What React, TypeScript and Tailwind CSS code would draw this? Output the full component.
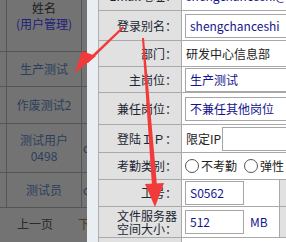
import React from 'react';

const font = { fontFamily: '"Noto Sans CJK SC", "Noto Sans", sans-serif' };

function Radio() {
  return <span className="inline-block w-[14px] h-[14px] rounded-full border border-[#555] bg-white mr-[2px]" />;
}

export default function App() {
  const leftRows = [
    { h: 'h-[35px]', text: ['生产测试'] },
    { h: 'h-[37px]', text: ['作废测试2'] },
    { h: 'h-[49px]', text: ['测试用户', '0498'], extra: 'c' },
    { h: 'h-[35px]', text: ['测试员'], extra: 'c' },
  ];

  const label = 'w-[83px] shrink-0 bg-[#e1e1e1] border-r border-[#a9a9a9] flex items-center justify-end pr-[4px] text-[12px] text-[#1b2633] whitespace-nowrap';
  const row = 'flex border-b border-[#a9a9a9]';
  const input = 'h-[24px] shrink-0 border border-[#a6a6a6] bg-white flex items-center px-[4px] text-[12px] text-[#14148c] whitespace-nowrap';

  return (
    <div className="relative w-[286px] h-[242px] overflow-hidden flex bg-white" style={font}>
      {/* table behind the dialog, greyed by the mask */}
      <div className="w-[87px] shrink-0 bg-[#737373] flex flex-col text-[12px] overflow-hidden">
        <div className="h-[52px] shrink-0 flex border-b border-[#555]">
          <div className="w-[6px] shrink-0" />
          <div className="w-[76px] shrink-0 border-l border-r border-[#555] flex flex-col items-center leading-[16px]">
            <span className="text-[#1c1c1c]">姓名</span>
            <span className="text-[#1e1e7a]">(用户管理)</span>
          </div>
        </div>
        {leftRows.map((r, i) => (
          <div key={i} className={`${r.h} shrink-0 flex border-b border-[#555]`}>
            <div className="w-[6px] shrink-0" />
            <div className="w-[76px] shrink-0 border-l border-r border-[#555] flex flex-col items-center justify-center leading-[16px] text-[#2b3f5c]">
              {r.text.map((t) => (
                <span key={t}>{t}</span>
              ))}
            </div>
            <div className="flex-1 flex items-center pl-[1px] text-[#2b3f5c]">{r.extra}</div>
          </div>
        ))}
        <div className="flex-1 flex items-center pb-[2px] text-[#2a2a2a] whitespace-nowrap">
          <span className="ml-[17px]">上一页</span>
          <span className="ml-[25px] text-[#4a3f22]">下</span>
        </div>
      </div>

      <div className="w-[11px] shrink-0 bg-[#e9eef3]" />

      {/* dialog form */}
      <div className="flex-1 min-w-0 flex flex-col border-l border-[#b0b0b0] mt-[-18px]">
        <div className={`${row} h-[29px]`}>
          <div className={label}>Email地址：</div>
          <div className="flex-1 flex items-center pl-[4px] text-[12px] text-[#14148c] whitespace-nowrap overflow-hidden">shengchanceshi@</div>
        </div>
        <div className={`${row} h-[30px]`}>
          <div className={label}>登录别名：</div>
          <div className="flex-1 flex items-center pl-[3px] overflow-hidden">
            <div className={`${input} w-[140px]`}>shengchanceshi</div>
          </div>
        </div>
        <div className={`${row} h-[26px]`}>
          <div className={label}>部门：</div>
          <div className="flex-1 flex items-center pl-[4px] text-[12px] text-[#222] whitespace-nowrap overflow-hidden">研发中心信息部</div>
        </div>
        <div className={`${row} h-[26px]`}>
          <div className={label}>主岗位：</div>
          <div className="flex-1 flex items-center pl-[3px] overflow-hidden">
            <div className={`${input} w-[140px]`}>生产测试</div>
          </div>
        </div>
        <div className={`${row} h-[32px]`}>
          <div className={label}>兼任岗位：</div>
          <div className="flex-1 flex items-center pl-[3px] overflow-hidden">
            <div className={`${input} w-[140px]`}>不兼任其他岗位</div>
          </div>
        </div>
        <div className={`${row} h-[28px]`}>
          <div className={label}>登陆ＩＰ：</div>
          <div className="flex-1 flex items-center pl-[4px] text-[12px] text-[#222] whitespace-nowrap overflow-hidden">
            限定IP
            <div className={`${input} w-[90px] ml-[1px]`} />
          </div>
        </div>
        <div className={`${row} h-[27px]`}>
          <div className={label}>考勤类别：</div>
          <div className="flex-1 flex items-center pl-[3px] text-[12px] text-[#222] whitespace-nowrap overflow-hidden">
            <Radio />
            不考勤
            <span className="ml-[7px]" />
            <Radio />
            弹性
          </div>
        </div>
        <div className={`${row} h-[27px]`}>
          <div className={label}>工号：</div>
          <div className="flex-1 flex items-center pl-[3px]">
            <div className={`${input} w-[59px]`}>S0562</div>
          </div>
          <div className="w-[7px] bg-[#e1e1e1] border-l border-[#a9a9a9]" />
        </div>
        <div className={`${row} h-[31px]`}>
          <div className={`${label} leading-[13px] text-right`}>
            文件服务器<br />空间大小：
          </div>
          <div className="flex-1 flex items-center pl-[3px] text-[12px] text-[#14148c]">
            <div className={`${input} w-[59px]`}>512</div>
            <span className="ml-[6px]">MB</span>
          </div>
          <div className="w-[7px] bg-[#e1e1e1] border-l border-[#a9a9a9]" />
        </div>
        <div className="flex-1 flex">
          <div className="w-[83px] bg-[#e1e1e1] border-r border-[#a9a9a9]" />
        </div>
      </div>

      {/* annotation arrows */}
      <svg className="absolute inset-0 pointer-events-none" width="286" height="242" viewBox="0 0 286 242">
        <polygon points="123,26 124,28 88,63 86,61" fill="#f23a3a" />
        <polygon points="96,56 75,73 82,51" fill="#f23a3a" />
        <polygon points="142,38 144,38 157,186 152,186" fill="#f23a3a" />
        <polygon points="145,184 164,183 155,207" fill="#f23a3a" />
      </svg>
    </div>
  );
}
